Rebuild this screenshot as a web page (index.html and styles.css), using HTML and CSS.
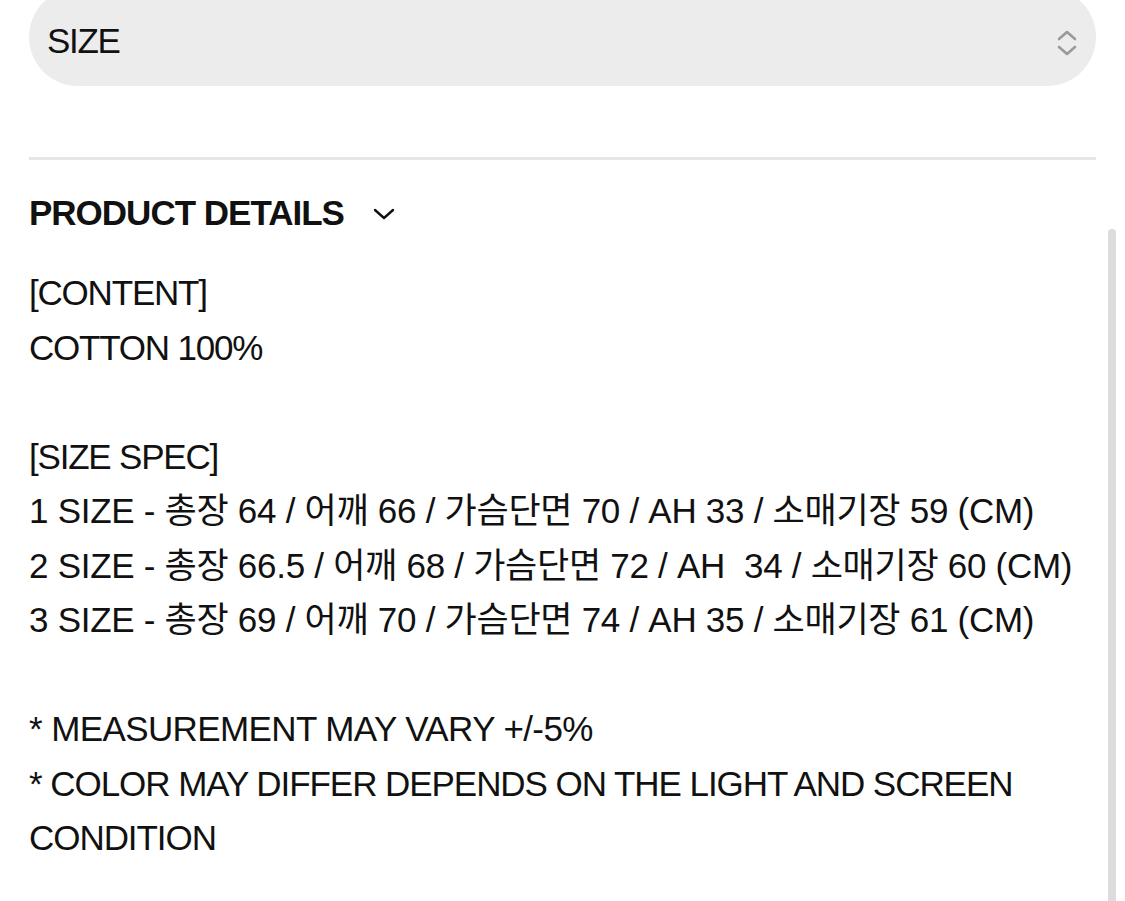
FILE: index.html
```html
<!DOCTYPE html>
<html lang="ko">
<head>
<meta charset="utf-8">
<link rel="stylesheet" href="styles.css">
</head>
<body>
<div class="page">
  <div class="main">
    <div class="select">
      <span class="select-label">SIZE</span>
      <svg class="select-icon" width="22" height="28" viewBox="0 0 22 28">
        <path d="M3 10 L11 3 L19 10" fill="none" stroke="#9a9a9a" stroke-width="2.6" stroke-linecap="round" stroke-linejoin="round"/>
        <path d="M3 18 L11 25 L19 18" fill="none" stroke="#9a9a9a" stroke-width="2.6" stroke-linecap="round" stroke-linejoin="round"/>
      </svg>
    </div>
    <hr class="divider">
    <div class="details-head">
      <h2 class="details-title">PRODUCT DETAILS</h2>
      <svg class="details-chevron" width="22" height="14" viewBox="0 0 22 14">
        <path d="M2 3 L11 11 L20 3" fill="none" stroke="#111" stroke-width="2.4" stroke-linecap="round" stroke-linejoin="round"/>
      </svg>
    </div>
    <div class="details-body">
      <p>[CONTENT]</p>
      <p>COTTON 100%</p>
      <p class="blank">&nbsp;</p>
      <p>[SIZE SPEC]</p>
      <p class="spec">1 SIZE - 총장 64 / 어깨 66 / 가슴단면 70 / AH 33 / 소매기장 59 (CM)</p>
      <p class="spec">2 SIZE - 총장 66.5 / 어깨 68 / 가슴단면 72 / AH&nbsp; 34 / 소매기장 60 (CM)</p>
      <p class="spec">3 SIZE - 총장 69 / 어깨 70 / 가슴단면 74 / AH 35 / 소매기장 61 (CM)</p>
      <p class="blank">&nbsp;</p>
      <p class="note">* MEASUREMENT MAY VARY +/-5%</p>
      <p class="note note-long">* COLOR MAY DIFFER DEPENDS ON THE LIGHT AND SCREEN CONDITION</p>
    </div>
  </div>
  <div class="scrollbar"></div>
</div>
</body>
</html>
```

FILE: styles.css
```css
html, body {
  margin: 0;
  padding: 0;
  background: #fff;
  overflow: hidden;
}
body {
  font-family: "Liberation Sans", Arial, "Noto Sans CJK KR", sans-serif;
  color: #111;
}
.page {
  position: relative;
  width: 1125px;
  height: 901px;
  overflow: hidden;
}
.main {
  width: 1067px;
  margin-left: 29px;
}
.select {
  margin-top: -12px;
  height: 98px;
  border-radius: 49px;
  background: #ececec;
  display: flex;
  align-items: center;
  justify-content: space-between;
  padding: 0 18px 0 18px;
  box-sizing: border-box;
}
.select-label {
  font-size: 35px;
  letter-spacing: -1.3px;
  color: #111;
  padding-top: 8px;
}
.select-icon {
  margin-top: 12px;
}
.divider {
  border: none;
  height: 3px;
  background: #e6e6e6;
  margin: 71px 0 0 0;
}
.details-head {
  display: flex;
  align-items: center;
  gap: 29px;
  margin-top: 33px;
}
.details-title {
  margin: 0;
  font-size: 35px;
  font-weight: 700;
  letter-spacing: -1.0px;
  line-height: 40px;
  color: #111;
}
.details-chevron {
  margin-top: 2px;
}
.details-body {
  margin-top: 33px;
  font-size: 35px;
  letter-spacing: -1.2px;
  line-height: 54.5px;
  color: #111;
}
.details-body p {
  margin: 0;
}
.details-body .spec {
  letter-spacing: -0.28px;
}
.details-body .note {
  letter-spacing: -0.6px;
}
.details-body .note-long {
  letter-spacing: -1.05px;
}
.scrollbar {
  position: absolute;
  left: 1108px;
  top: 229px;
  width: 8px;
  height: 700px;
  border-radius: 4px;
  background: #dcdcdc;
}
```
